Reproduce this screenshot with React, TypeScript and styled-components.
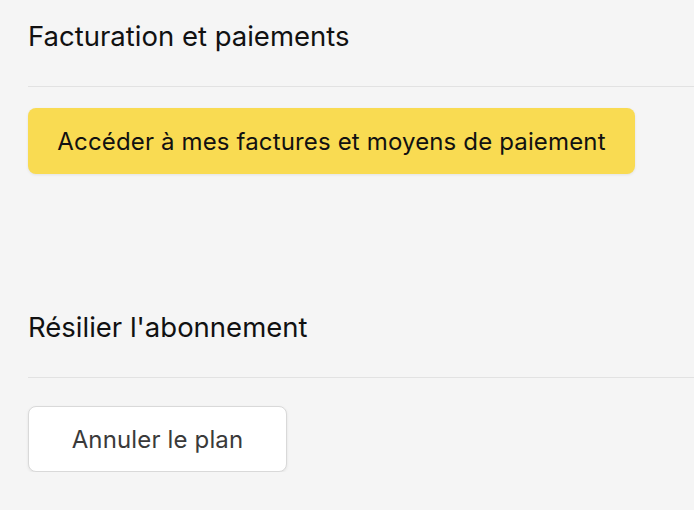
import React from "react";
import styled, { createGlobalStyle } from "styled-components";

const GlobalStyle = createGlobalStyle`
  html, body {
    margin: 0;
    padding: 0;
    background: #f5f5f5;
    font-family: Inter, "Noto Sans", sans-serif;
    color: #111;
  }
`;

const Page = styled.div`
  display: flex;
  flex-direction: column;
  gap: 117px;
  padding-left: 28px;
`;

const Section = styled.section`
  display: flex;
  flex-direction: column;
`;

const SectionTitle = styled.h2`
  margin: 0;
  padding: 20px 0 34px;
  font-size: 27.5px;
  line-height: 32px;
  font-weight: 400;
  color: #111;
  border-bottom: 1px solid #e2e2e2;
`;

const Actions = styled.div<{ $top: number }>`
  display: flex;
  padding-top: ${({ $top }) => $top}px;
`;

const Button = styled.button<{ $variant: "primary" | "secondary" }>`
  height: 66px;
  border-radius: 8px;
  font-family: inherit;
  font-size: 24px;
  letter-spacing: 0.15px;
  font-weight: 400;
  cursor: pointer;
  box-shadow: 0 1px 3px rgba(0, 0, 0, 0.08);
  ${({ $variant }) =>
    $variant === "primary"
      ? `
    width: 607px;
    background: #f9db52;
    border: none;
    color: #111;
  `
      : `
    width: 259px;
    background: #fff;
    border: 1px solid #d9d9d9;
    color: #3a3a3a;
  `}
`;

const App = () => {
  return (
    <>
      <GlobalStyle />
      <Page>
        <Section>
          <SectionTitle>Facturation et paiements</SectionTitle>
          <Actions $top={21}>
            <Button $variant="primary">
              Accéder à mes factures et moyens de paiement
            </Button>
          </Actions>
        </Section>
        <Section>
          <SectionTitle>Résilier l'abonnement</SectionTitle>
          <Actions $top={28}>
            <Button $variant="secondary">Annuler le plan</Button>
          </Actions>
        </Section>
      </Page>
    </>
  );
};

export default App;
